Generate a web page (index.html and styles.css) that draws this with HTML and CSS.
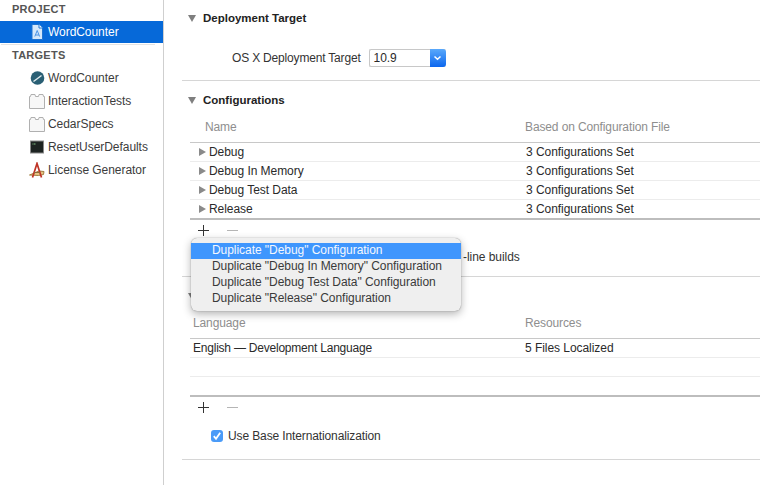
FILE: index.html
```html
<!DOCTYPE html>
<html lang="en">
<head>
  <meta charset="UTF-8" />
  <title>WordCounter</title>
  <link rel="stylesheet" href="styles.css">
</head>
<body>
  <aside class="sidebar">
    <div class="group-title first">PROJECT</div>
    <div class="item selected">
      <svg class="icon" viewBox="0 0 16 16"><path d="M3 .5h7L13.500 4V15.500H3z" fill="#d5e8fb" stroke="#1f74d2"/><path d="M10 .5V4h3.500" fill="#fff" stroke="#1f74d2"/><path d="M5.800 12.500 8.200 6.500l2.400 6M6.600 11h3.200" fill="none" stroke="#4a94e6"/></svg>
      <span>WordCounter</span>
    </div>
    <div class="group-rule"></div>
    <div class="group-title targets">TARGETS</div>
    <div class="item">
      <svg class="icon" viewBox="0 0 16 16"><circle cx="8.500" cy="8" r="6.800" fill="#2a5f74"/><path d="M4.500 11.500 12.500 5.500" stroke="#dfe9ec" stroke-width="1.500"/></svg>
      <span>WordCounter</span>
    </div>
    <div class="item">
      <svg class="icon" viewBox="0 0 16 16"><path d="M.5 15.500V3.500H1.500L2 1.500H6L6.500 3.500H9.500L10 1.500H14L14.500 3.500H15.500V15.500z" fill="#f7f7f7" stroke="#b0b0b0"/></svg>
      <span>InteractionTests</span>
    </div>
    <div class="item">
      <svg class="icon" viewBox="0 0 16 16"><path d="M.5 15.500V3.500H1.500L2 1.500H6L6.500 3.500H9.500L10 1.500H14L14.500 3.500H15.500V15.500z" fill="#f7f7f7" stroke="#b0b0b0"/></svg>
      <span>CedarSpecs</span>
    </div>
    <div class="item">
      <svg class="icon" viewBox="0 0 16 16"><rect x="1.500" y="2" width="13" height="12" fill="#1d2321" stroke="#8a8a8a"/><path d="M3.500 5H7" stroke="#86c386" stroke-dasharray="1 .5"/></svg>
      <span>ResetUserDefaults</span>
    </div>
    <div class="item">
      <svg class="icon" viewBox="0 0 16 16"><path d="M.5 13 10 9l5 .5-.5 3-5 1z" fill="#e4c483" stroke="#a17f42"/><path d="M3.500 15.500 8 1.500 12.500 15.500" fill="none" stroke="#bf3326" stroke-width="1.700"/><path d="M5 10.500h6" stroke="#8a6a3a"/></svg>
      <span>License Generator</span>
    </div>
  </aside>

  <main class="content">
    <section class="panel deployment">
      <h3 class="panel-title"><i class="disclosure"></i>Deployment Target</h3>
      <div class="target-row">
        <label class="target-label">OS X Deployment Target</label>
        <div class="combo">
          <span class="combo-value">10.9</span>
          <span class="combo-arrow"><svg width="9" height="6" viewBox="0 0 9 6"><path d="M1.500 1.500 4.500 4.300 7.500 1.500" fill="none" stroke="#fff" stroke-width="1.500"/></svg></span>
        </div>
      </div>
    </section>

    <section class="panel configurations">
      <h3 class="panel-title"><i class="disclosure"></i>Configurations</h3>
      <div class="table-head indented">
        <span class="col-name">Name</span>
        <span>Based on Configuration File</span>
      </div>
      <div class="table-row"><span class="col-name"><i class="row-arrow"></i>Debug</span><span>3 Configurations Set</span></div>
      <div class="table-row"><span class="col-name"><i class="row-arrow"></i>Debug In Memory</span><span>3 Configurations Set</span></div>
      <div class="table-row"><span class="col-name"><i class="row-arrow"></i>Debug Test Data</span><span>3 Configurations Set</span></div>
      <div class="table-row last"><span class="col-name"><i class="row-arrow"></i>Release</span><span>3 Configurations Set</span></div>
      <div class="table-tools"><span class="plus"></span><span class="minus"></span></div>
      <p class="builds-note">-line builds</p>

      <div class="popup">
        <div class="popup-item active">Duplicate "Debug" Configuration</div>
        <div class="popup-item">Duplicate "Debug In Memory" Configuration</div>
        <div class="popup-item">Duplicate "Debug Test Data" Configuration</div>
        <div class="popup-item">Duplicate "Release" Configuration</div>
      </div>
    </section>

    <section class="panel localizations">
      <h3 class="panel-title"><i class="disclosure"></i></h3>
      <div class="table-head">
        <span class="col-name">Language</span>
        <span>Resources</span>
      </div>
      <div class="table-row"><span class="col-name lang-name">English — Development Language</span><span>5 Files Localized</span></div>
      <div class="table-row"></div>
      <div class="table-row last"></div>
      <div class="table-tools"><span class="plus"></span><span class="minus"></span></div>
      <div class="check-row">
        <span class="checkbox"><svg width="10" height="10" viewBox="0 0 10 10"><path d="M1.800 5.200 4 7.800 8.200 1.800" fill="none" stroke="#fff" stroke-width="1.800"/></svg></span>
        <span>Use Base Internationalization</span>
      </div>
    </section>
  </main>
</body>
</html>
```

FILE: styles.css
```css
* {
  box-sizing: border-box;
}

html, body {
  height: 100%;
}

body {
  margin: 0;
  display: flex;
  overflow: hidden;
  background: white;
  color: #2a2a2a;
  font-family: "Liberation Sans", Arial, sans-serif;
  font-size: 12px;
  letter-spacing: -0.05px;
}

.sidebar {
  flex: 0 0 164px;
  border-right: 1px solid #cfcfcf;
}

.group-title {
  height: 21px;
  padding: 1px 0 0 12px;
  color: #555;
  font-weight: bold;
  font-size: 11px;
  letter-spacing: 0.25px;
  line-height: 17px;
}

.group-title.targets {
  padding-top: 2px;
}

.group-rule {
  height: 1px;
  margin: 1px 8px 0 1px;
  background: #e4e4e4;
}

.item {
  display: flex;
  align-items: center;
  height: 23px;
  padding-left: 29px;
  gap: 3px;
  color: #3c3c3c;
}

.item.selected {
  height: 22px;
  background: #0669d9;
  color: white;
}

.icon {
  width: 16px;
  height: 16px;
  flex: none;
}

.content {
  flex: 1;
  padding-left: 18px;
  position: relative;
}

.panel {
  position: relative;
  border-bottom: 1px solid #d6d6d6;
}

.deployment {
  height: 81px;
}

.configurations {
  height: 196px;
  z-index: 1;
}

.localizations {
  height: 183px;
}

.panel-title {
  display: flex;
  align-items: center;
  margin: 0;
  padding-top: 9px;
  height: 29px;
  font-size: 11.500px;
  letter-spacing: 0;
  color: #222;
}

.deployment .panel-title {
  padding-top: 7px;
}

.disclosure {
  width: 0;
  height: 0;
  margin: 0 7px 0 6px;
  border-left: 4px solid transparent;
  border-right: 4px solid transparent;
  border-top: 7px solid #7f7f7f;
}

.target-row {
  display: flex;
  align-items: center;
  margin-top: 20px;
  padding-left: 50px;
  gap: 8px;
}

.target-label {
  color: #333;
  letter-spacing: -0.18px;
}

.combo {
  display: flex;
  width: 77px;
  height: 18px;
  border: 1px solid #c8c8c8;
  border-right: none;
  border-radius: 2px;
}

.combo-value {
  flex: 1;
  padding-left: 4px;
  line-height: 17px;
}

.combo-arrow {
  display: flex;
  align-items: center;
  justify-content: center;
  width: 16px;
  margin: -1px 0;
  border-radius: 0 3px 3px 0;
  background: linear-gradient(#5aa9fb, #0b66ee);
}

.table-head {
  display: flex;
  align-items: flex-start;
  height: 33px;
  margin-left: 8px;
  padding-top: 10px;
  line-height: 14px;
  letter-spacing: -0.12px;
  color: #8e8e8e;
  border-bottom: 1px solid #c8c8c8;
}

.col-name {
  display: flex;
  align-items: center;
  flex: 0 0 335px;
  padding-left: 3px;
}

.configurations .table-row .col-name {
  flex-basis: 336px;
}

.table-head.indented .col-name {
  padding-left: 15px;
}

.lang-name {
  letter-spacing: -0.22px;
}

.table-row {
  display: flex;
  align-items: center;
  height: 19px;
  padding-bottom: 1px;
  margin-left: 8px;
  color: #2a2a2a;
  border-bottom: 1px solid #ececec;
}

.table-row.last {
  border-bottom: 2px solid #bdbdbd;
  height: 20px;
}

.row-arrow {
  width: 0;
  height: 0;
  margin: 1px 3px 0 6px;
  border-top: 4px solid transparent;
  border-bottom: 4px solid transparent;
  border-left: 7px solid #8a8a8a;
}

.table-tools {
  display: flex;
  align-items: center;
  height: 21px;
  margin-left: 16px;
  gap: 18px;
}

.plus {
  width: 11px;
  height: 11px;
  background:
    linear-gradient(#333, #333) center / 100% 1px no-repeat,
    linear-gradient(#333, #333) center / 1px 100% no-repeat;
}

.minus {
  width: 11px;
  height: 1px;
  background: #b5b5b5;
}

.builds-note {
  margin: 0;
  padding: 9px 0 0 281px;
  line-height: 14px;
  color: #333;
}

.popup {
  position: absolute;
  left: 9px;
  top: 157px;
  width: 270px;
  height: 73px;
  padding-top: 5px;
  background: #efefef;
  border-radius: 6px;
  box-shadow: 0 0 1px rgba(0,0,0,0.5), 0 3px 9px rgba(0,0,0,0.3);
  color: #3a3a3a;
}

.popup-item {
  height: 16px;
  padding-left: 21px;
  line-height: 15px;
}

.popup-item.active {
  background: #3f96fd;
  color: #f4f8ff;
}

.check-row {
  display: flex;
  align-items: center;
  margin: 11px 0 0 29px;
  gap: 5px;
  letter-spacing: -0.12px;
  color: #333;
}

.checkbox {
  display: flex;
  align-items: center;
  justify-content: center;
  width: 12px;
  height: 12px;
  border-radius: 3px;
  background: #4a9bf8;
}
```
